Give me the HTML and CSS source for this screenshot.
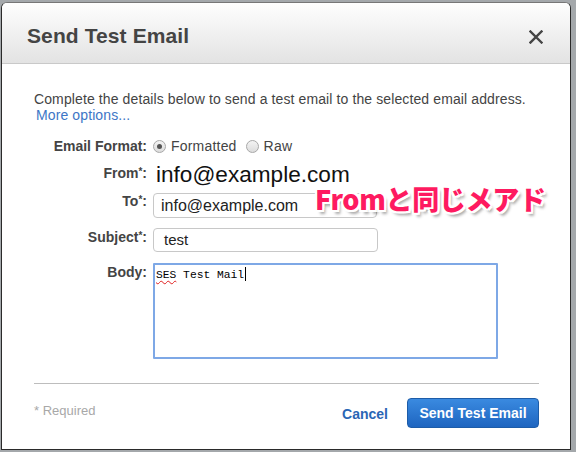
FILE: index.html
```html
<!DOCTYPE html>
<html>
<head>
<meta charset="utf-8">
<link rel="stylesheet" href="styles.css">
</head>
<body>
<div class="dialog">
  <div class="header">
    <h1 class="title">Send Test Email</h1>
    <svg class="close" width="14" height="14" viewBox="0 0 14 14"><path d="M1.5 1.5 L12.5 12.5 M12.5 1.5 L1.5 12.5" stroke="#444" stroke-width="2.4" stroke-linecap="square" fill="none"/></svg>
  </div>
  <div class="content">
    <p class="intro">Complete the details below to send a test email to the selected email address.<br><a class="more">More options...</a></p>
    <div class="form">
      <div class="label">Email Format:</div>
      <div class="radios">
        <span class="radio checked"></span><span class="rlabel">Formatted</span>
        <span class="radio"></span><span class="rlabel">Raw</span>
      </div>
      <div class="label label-from">From<sup>*</sup>:</div>
      <div class="from-value">info@example.com</div>
      <div class="label label-to">To<sup>*</sup>:</div>
      <div class="field field-to">info@example.com</div>
      <div class="label label-sub">Subject<sup>*</sup>:</div>
      <div class="field field-sub">test</div>
      <div class="label label-sub">Body:</div>
      <div class="textarea"><span class="typo">SES</span> Test Mail<span class="caret"></span></div>
      <div class="note">Fromと同じメアド</div>
    </div>
    <div class="divider"></div>
    <div class="footer">
      <span class="required">* Required</span>
      <div class="actions">
        <a class="cancel">Cancel</a>
        <span class="btn">Send Test Email</span>
      </div>
    </div>
  </div>
</div>
</body>
</html>
```
FILE: styles.css
```css
html, body {
  margin: 0;
  padding: 0;
}
body {
  background: #a4a8ab;
  font-family: "Liberation Sans", Arial, sans-serif;
  width: 576px;
  height: 452px;
  overflow: hidden;
  padding-top: 2px;
  box-sizing: border-box;
}
.dialog {
  margin-left: 1px;
  width: 570px;
  height: 448px;
  box-sizing: border-box;
  border: 1px solid #2a2a2a;
  border-top-color: #777;
  border-radius: 6px 6px 0 0;
  background: #fff;
  display: flex;
  flex-direction: column;
}
.header {
  height: 61px;
  box-sizing: border-box;
  border-bottom: 1px solid #c9c9c9;
  border-radius: 5px 5px 0 0;
  background: linear-gradient(#fefefe, #e3e3e3);
  display: flex;
  align-items: center;
  justify-content: space-between;
  padding: 6px 27px 0 25px;
}
.title {
  margin: 0;
  font-size: 21px;
  font-weight: bold;
  color: #444;
  letter-spacing: 0.1px;
}
.close {
  display: block;
  margin-top: 2px;
}
.content {
  position: relative;
  padding: 27px 31px 0 32px;
}
.intro {
  margin: 0;
  font-size: 14px;
  line-height: 16px;
  color: #444;
  letter-spacing: 0.11px;
}
.more {
  color: #3d76c6;
  margin-left: 2px;
}
.form {
  position: relative;
  margin-top: 15px;
  display: grid;
  grid-template-columns: 113px 1fr;
  grid-template-rows: 24px 31px 35px 35px 96px;
  column-gap: 6px;
  align-items: start;
}
.label {
  text-align: right;
  font-size: 14px;
  line-height: 16px;
  font-weight: bold;
  color: #444;
}
.label sup {
  font-size: 10px;
  line-height: 0;
  vertical-align: 3px;
}
.label-from {
  padding-top: 3px;
}
.label-to {
  padding-top: 0;
}
.label-sub {
  padding-top: 1px;
}
.radios {
  display: flex;
  align-items: center;
  height: 16px;
  font-size: 14px;
  color: #444;
}
.radio {
  width: 11px;
  height: 11px;
  border: 1px solid #a8a8a8;
  border-radius: 50%;
  background: linear-gradient(#f4f4f4, #dcdcdc);
  box-sizing: content-box;
  position: relative;
  margin-right: 5px;
}
.radio.checked::after {
  content: "";
  position: absolute;
  left: 3px;
  top: 3px;
  width: 5px;
  height: 5px;
  border-radius: 50%;
  background: #555;
}
.rlabel {
  margin-right: 9px;
  letter-spacing: 0.2px;
}
.from-value {
  font-size: 22.6px;
  line-height: 24px;
  color: #111;
  padding-left: 3px;
  margin-top: 1px;
}
.field {
  width: 224px;
  box-sizing: border-box;
  border: 1px solid #c8c8c8;
  border-radius: 4px;
  color: #222;
  background: #fff;
}
.field-to {
  height: 25px;
  font-size: 16px;
  line-height: 23px;
  padding-left: 7px;
}
.field-sub {
  height: 24px;
  width: 225px;
  font-size: 15px;
  line-height: 22px;
  padding-left: 10px;
}
.textarea {
  width: 345px;
  height: 96px;
  box-sizing: border-box;
  border: 2px solid #7ea8e6;
  border-radius: 1px;
  font-family: "Liberation Mono", "DejaVu Sans Mono", monospace;
  font-size: 11.3px;
  line-height: 14px;
  padding: 2px 1px;
  color: #000;
}
.typo {
  text-decoration: underline wavy #e02020;
  text-decoration-thickness: 1px;
  text-underline-offset: 2px;
}
.caret {
  display: inline-block;
  width: 1px;
  height: 14px;
  background: #000;
  vertical-align: -3px;
  margin-left: 1px;
}
.note {
  position: absolute;
  left: 281px;
  top: 45px;
  font-family: "Noto Sans CJK JP", sans-serif;
  font-weight: 900;
  font-size: 27px;
  line-height: 32px;
  color: #fe1a60;
  letter-spacing: -0.3px;
  white-space: nowrap;
  text-shadow:
    -2px 0 0 #fff, 2px 0 0 #fff, 0 -2px 0 #fff, 0 2px 0 #fff,
    -2px -2px 0 #fff, 2px 2px 0 #fff, -2px 2px 0 #fff, 2px -2px 0 #fff,
    3px 4px 3px rgba(0,0,0,0.35);
}
.divider {
  margin-top: 24px;
  height: 1px;
  background: #bdbdbd;
}
.footer {
  margin-top: 14px;
  display: flex;
  justify-content: space-between;
  align-items: flex-start;
}
.required {
  font-size: 13px;
  line-height: 16px;
  padding-top: 5px;
  color: #a8a8a8;
}
.actions {
  display: flex;
  align-items: center;
}
.cancel {
  font-size: 14px;
  font-weight: bold;
  color: #2a66b5;
  margin-right: 19px;
  margin-top: 2px;
}
.btn {
  display: block;
  width: 132px;
  height: 30px;
  box-sizing: border-box;
  border: 1px solid #1d5ca8;
  border-radius: 4px;
  background: linear-gradient(#3a8ae0, #1e65c0);
  color: #fff;
  font-size: 14px;
  font-weight: bold;
  line-height: 28px;
  text-align: center;
}
```
